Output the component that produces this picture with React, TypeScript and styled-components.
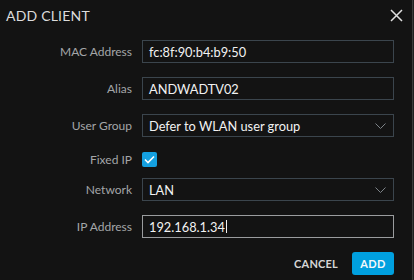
import React from "react";
import styled, { createGlobalStyle } from "styled-components";

const Global = createGlobalStyle`
  html, body { margin: 0; padding: 0; background: #1e1e1e; }
  body { font-family: Lato, "Open Sans", sans-serif; }
  * { box-sizing: border-box; }
`;

const Dialog = styled.div`
  width: 413px;
  height: 280px;
  background: #131313;
  border-right: 1px solid #3a3a3a;
  display: flex;
  flex-direction: column;
`;

const Header = styled.div`
  height: 31px;
  display: flex;
  align-items: center;
  justify-content: space-between;
  padding: 0 8px 0 6px;
`;

const Title = styled.h1`
  margin: 0;
  font-size: 14px;
  font-weight: 400;
  letter-spacing: 0.2px;
  color: #dcdcdc;
  text-transform: uppercase;
`;

const CloseButton = styled.button`
  width: 16px;
  height: 16px;
  padding: 0;
  border: none;
  background: none;
  display: flex;
  align-items: center;
  justify-content: center;
  cursor: pointer;
`;

const Form = styled.div`
  display: flex;
  flex-direction: column;
  padding-top: 9px;
  padding-right: 18px;
`;

const Row = styled.div<{ $mt?: number }>`
  display: grid;
  grid-template-columns: 132px 1fr;
  column-gap: 10px;
  align-items: center;
  margin-top: ${(p) => p.$mt ?? 0}px;
  min-height: 23px;
`;

const Label = styled.label`
  text-align: right;
  font-size: 12px;
  color: #a4a6a8;
`;

const Field = styled.div<{ $focused?: boolean; $select?: boolean }>`
  height: 23px;
  border: 1px solid ${(p) => (p.$focused ? "#9a9c9e" : "#3b454d")};
  display: flex;
  align-items: center;
  justify-content: ${(p) => (p.$select ? "space-between" : "flex-start")};
  padding: 0 7px 0 6px;
  font-size: 12.8px;
  color: #f2f2f2;
`;

const Caret = styled.span`
  display: inline-block;
  width: 1px;
  height: 13px;
  background: #f2f2f2;
  margin-left: 1px;
`;

const Checkbox = styled.span`
  width: 15px;
  height: 15px;
  border-radius: 2px;
  background: #14a0e0;
  display: flex;
  align-items: center;
  justify-content: center;
`;

const Footer = styled.div`
  display: flex;
  justify-content: flex-end;
  align-items: center;
  gap: 14px;
  padding-right: 18px;
  margin-top: 14px;
`;

const TextButton = styled.button`
  background: none;
  border: none;
  padding: 0;
  font-family: inherit;
  font-size: 11px;
  font-weight: 700;
  letter-spacing: 0.2px;
  color: #d6d6d6;
`;

const PrimaryButton = styled.button`
  width: 42px;
  height: 23px;
  border: none;
  border-radius: 3px;
  background: #00a0df;
  color: #f4f8fa;
  font-family: inherit;
  font-size: 11px;
  font-weight: 700;
  letter-spacing: 0.3px;
  padding: 0;
`;

const Chevron = () => (
  <svg width="11" height="6" viewBox="0 0 11 6" fill="none">
    <path d="M0.5 0.5l5 5 5-5" stroke="#7d8388" strokeWidth="1" />
  </svg>
);

export default function App() {
  return (
    <>
      <Global />
      <Dialog>
        <Header>
          <Title>Add Client</Title>
          <CloseButton aria-label="close">
            <svg width="13" height="13" viewBox="0 0 13 13">
              <path d="M1 1l11 11M12 1L1 12" stroke="#e0e0e0" strokeWidth="1.5" />
            </svg>
          </CloseButton>
        </Header>
        <Form>
          <Row>
            <Label>MAC Address</Label>
            <Field>fc:8f:90:b4:b9:50</Field>
          </Row>
          <Row $mt={14}>
            <Label>Alias</Label>
            <Field>ANDWADTV02</Field>
          </Row>
          <Row $mt={14}>
            <Label>User Group</Label>
            <Field $select>
              <span>Defer to WLAN user group</span>
              <Chevron />
            </Field>
          </Row>
          <Row $mt={11}>
            <Label>Fixed IP</Label>
            <Checkbox>
              <svg width="11" height="9" viewBox="0 0 11 9" fill="none">
                <path d="M1 4.5l3 3L10 1.5" stroke="#ffffff" strokeWidth="1.6" />
              </svg>
            </Checkbox>
          </Row>
          <Row $mt={7}>
            <Label>Network</Label>
            <Field $select>
              <span>LAN</span>
              <Chevron />
            </Field>
          </Row>
          <Row $mt={14}>
            <Label>IP Address</Label>
            <Field $focused>
              192.168.1.34<Caret />
            </Field>
          </Row>
        </Form>
        <Footer>
          <TextButton>CANCEL</TextButton>
          <PrimaryButton>ADD</PrimaryButton>
        </Footer>
      </Dialog>
    </>
  );
}
